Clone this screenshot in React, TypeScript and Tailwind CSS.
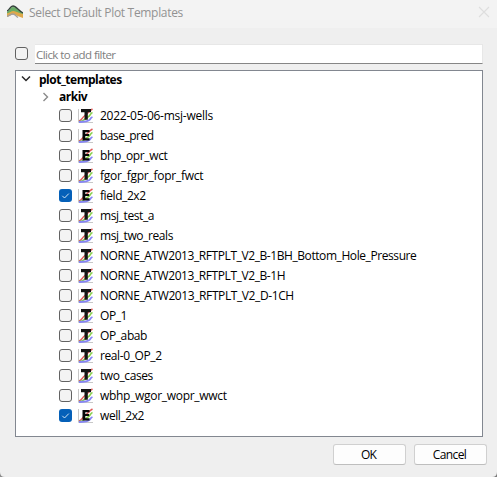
type Item = { name: string; kind: 'T' | 'E'; checked?: boolean; tracking: string };

const items: Item[] = [
  { name: '2022-05-06-msj-wells', kind: 'T', tracking: 'tracking-[-0.25px]' },
  { name: 'base_pred', kind: 'E', tracking: 'tracking-[-0.5px]' },
  { name: 'bhp_opr_wct', kind: 'E', tracking: 'tracking-[-0.35px]' },
  { name: 'fgor_fgpr_fopr_fwct', kind: 'T', tracking: 'tracking-[-0.25px]' },
  { name: 'field_2x2', kind: 'E', checked: true, tracking: 'tracking-[-0.42px]' },
  { name: 'msj_test_a', kind: 'T', tracking: 'tracking-[-0.4px]' },
  { name: 'msj_two_reals', kind: 'T', tracking: 'tracking-[-0.4px]' },
  { name: 'NORNE_ATW2013_RFTPLT_V2_B-1BH_Bottom_Hole_Pressure', kind: 'T', tracking: 'tracking-[-0.42px]' },
  { name: 'NORNE_ATW2013_RFTPLT_V2_B-1H', kind: 'T', tracking: 'tracking-[-0.42px]' },
  { name: 'NORNE_ATW2013_RFTPLT_V2_D-1CH', kind: 'T', tracking: 'tracking-[-0.4px]' },
  { name: 'OP_1', kind: 'T', tracking: 'tracking-[-0.4px]' },
  { name: 'OP_abab', kind: 'T', tracking: 'tracking-[-0.4px]' },
  { name: 'real-0_OP_2', kind: 'T', tracking: 'tracking-[-0.4px]' },
  { name: 'two_cases', kind: 'T', tracking: 'tracking-[-0.42px]' },
  { name: 'wbhp_wgor_wopr_wwct', kind: 'T', tracking: 'tracking-[-0.3px]' },
  { name: 'well_2x2', kind: 'E', checked: true, tracking: 'tracking-[-0.42px]' },
];

function Checkbox({ checked }: { checked?: boolean }) {
  return checked ? (
    <span className="flex size-[13px] shrink-0 items-center justify-center rounded-[3px] bg-[#0560b8]">
      <svg width="13" height="13" viewBox="0 0 13 13" fill="none">
        <path d="M3.3 6.8 5.5 9 9.8 4.6" stroke="#e4f0fb" strokeWidth="0.9" />
      </svg>
    </span>
  ) : (
    <span className="size-[13px] shrink-0 rounded-[3px] border border-[#626262] bg-[#f3f3f3]" />
  );
}

function PlotIcon({ kind }: { kind: 'T' | 'E' }) {
  return (
    <svg className="ml-[5px] shrink-0" width="16" height="16" viewBox="0 0 16 16" fill="none">
      <path d="M1.5 1v13.5H16" stroke="#c8c8c8" />
      <path d="M2 13C5 12 5 9.5 8 7.5S12 3 15.5 1" stroke="#e05a58" strokeWidth="1.5" />
      <path d="M2 13.8C7 13 8 10.5 11 9S13 5.5 15.5 4.5" stroke="#86cf4c" strokeWidth="1.6" />
      <path d="M2 14C7 13.5 9 14 11.5 12.5S13 10 15.5 9" stroke="#8585f5" strokeWidth="1.8" />
      {kind === 'T' ? (
        <path d="M4 1h10v3.2h-3.2v7.5H7.5V4.2H4z" fill="#151515" />
      ) : (
        <path d="M5.5 2h7v2.2H8.3v1.9h3.8v2H8.3v2.2h4.2v2.2h-7z" fill="#080808" />
      )}
    </svg>
  );
}

export default function App() {
  return (
    <div className="relative flex h-[477px] w-[497px] flex-col overflow-hidden bg-[#efefef] font-['Open_Sans','Noto_Sans',sans-serif] text-[12px] text-black">
      <header className="flex h-[28px] shrink-0 items-center bg-[#f3f3f3] pr-[7px] pl-[7px] text-[#929292]">
        <svg className="-mt-[3px]" width="16" height="16" viewBox="0 0 16 16" fill="none">
          <path d="M0 7C3 5.5 3 2 6 2S11 5 16 8v2C11 9.5 8 7 6 7S3 8 0 9z" fill="#69ad65" />
          <path d="M0 6C3 4.5 3 1 6 1S11 5 16 8" stroke="#34423a" strokeWidth="1.4" />
          <path d="M0 8.5C3 7.5 4 6 6.5 6S12 8.5 16 9v4C12 12 9 9.5 6.5 9.5S3 11 0 12z" fill="#dfa94b" />
          <path d="M0 11.5C3 10 4 9 6 9S9 11 11 12.5" stroke="#a3a09c" strokeWidth="1.3" />
        </svg>
        <span className="-mt-[3px] ml-[6px] whitespace-nowrap tracking-[-0.32px]">Select Default Plot Templates</span>
        <svg className="-mt-[4px] ml-auto" width="12" height="12" viewBox="0 0 12 12">
          <path d="m1 1 10 10M11 1 1 11" stroke="#dedede" strokeWidth="1.1" />
        </svg>
      </header>

      <div className="mt-[16px] flex h-[20px] shrink-0 items-center pr-[14px] pl-[15px]">
        <span className="-mt-px flex"><Checkbox /></span>
        <div className="ml-[7px] flex h-[20px] flex-1 items-center border-t border-r border-b border-t-[#e7e7e7] border-r-[#e7e7e7] border-b-[#868686] bg-white pl-[1px] text-[11.5px] text-[#7e7e7e]">
          <span className="mt-[2px] whitespace-nowrap tracking-[-0.55px]">Click to add filter</span>
        </div>
      </div>

      <main className="mt-[6px] ml-[15px] h-[367px] w-[468px] shrink-0 border border-[#828790] bg-white">
        <div className="flex h-[17px] items-center font-bold">
          <svg className="-mt-px ml-[5px]" width="10" height="8" viewBox="0 0 10 8" fill="none">
            <path d="m1 1.5 4 4 4-4" stroke="#282828" strokeWidth="1.5" />
          </svg>
          <span className="ml-[8px] tracking-[-0.5px]">plot_templates</span>
        </div>
        <div className="flex h-[18px] items-center font-bold">
          <svg className="-mt-px ml-[26px]" width="8" height="10" viewBox="0 0 8 10" fill="none">
            <path d="m1.5 1 4 4-4 4" stroke="#8a8a8a" strokeWidth="1.4" />
          </svg>
          <span className="ml-[9px] tracking-[-0.5px]">arkiv</span>
        </div>
        {items.map((item) => (
          <div key={item.name} className="flex h-[20px] items-center pl-[43px]">
            <span className="-mt-px flex"><Checkbox checked={item.checked} /></span>
            <PlotIcon kind={item.kind} />
            <span className={`ml-[7px] whitespace-nowrap ${item.tracking}`}>{item.name}</span>
          </div>
        ))}
      </main>

      <footer className="mt-[7px] flex justify-end gap-[8px] pr-[10px]">
        <button className="flex h-[21px] w-[73px] items-center justify-center rounded-[3px] border border-[#d0d0d0] border-b-[#bebebe] bg-[#fdfdfd]">
          <span className="-ml-[2px] tracking-[-0.8px]">OK</span>
        </button>
        <button className="flex h-[21px] w-[73px] items-center justify-center rounded-[3px] border border-[#d0d0d0] border-b-[#bebebe] bg-[#fdfdfd]">
          <span className="-ml-[2px] tracking-[-0.6px]">Cancel</span>
        </button>
      </footer>

      {/* Desktop showing past the window's rounded corners */}
      <svg className="absolute bottom-0 left-0" width="5" height="5" viewBox="0 0 5 5">
        <path d="M0 0Q0 5 5 5H0z" fill="#8c8c8c" />
      </svg>
      <svg className="absolute right-0 bottom-0" width="5" height="5" viewBox="0 0 5 5">
        <path d="M5 0Q5 5 0 5H5z" fill="#7c7c7c" />
      </svg>
    </div>
  );
}
